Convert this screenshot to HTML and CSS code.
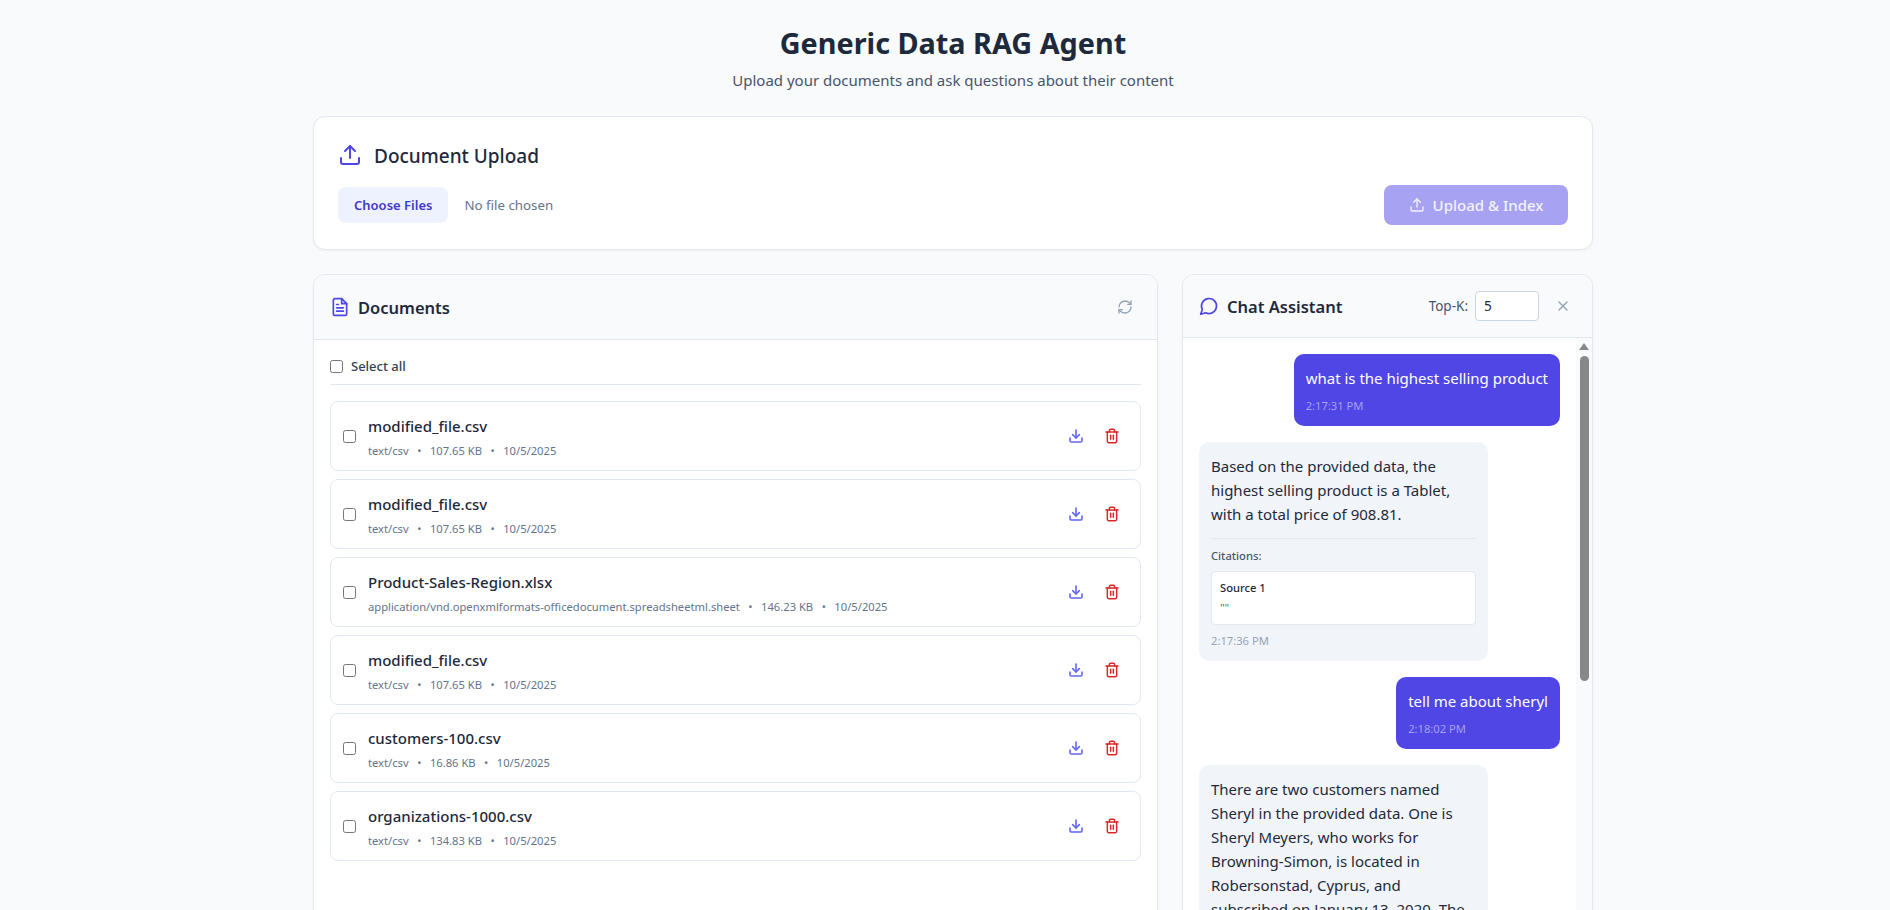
FILE: index.html
```html
<!DOCTYPE html>
<html lang="en">
<head>
    <meta charset="UTF-8">
    <meta name="viewport" content="width=device-width, initial-scale=1.0">
    <title>Generic Data RAG Agent</title>
    <link rel="stylesheet" href="styles.css">
</head>
<body>
    <div class="wrapper">
        <header class="page-head">
            <h1>Generic Data RAG Agent</h1>
            <p>Upload your documents and ask questions about their content</p>
        </header>

        <section class="card upload-card">
            <div class="upload-title">
                <svg class="icon-upload" viewBox="0 0 24 24" fill="none" stroke="currentColor" stroke-width="2" stroke-linecap="round" stroke-linejoin="round"><path d="M3 15v4a2 2 0 0 0 2 2h14a2 2 0 0 0 2-2v-4"/><path d="M17 8l-5-5-5 5"/><path d="M12 3v12"/></svg>
                <h2>Document Upload</h2>
            </div>
            <div class="upload-row">
                <div class="file-pick">
                    <span class="file-btn">Choose Files</span>
                    <span class="file-none">No file chosen</span>
                </div>
                <button class="upload-btn" type="button" disabled>
                    <svg viewBox="0 0 24 24" fill="none" stroke="currentColor" stroke-width="2" stroke-linecap="round" stroke-linejoin="round"><path d="M3 15v4a2 2 0 0 0 2 2h14a2 2 0 0 0 2-2v-4"/><path d="M17 8l-5-5-5 5"/><path d="M12 3v12"/></svg>
                    Upload &amp; Index
                </button>
            </div>
        </section>

        <div class="panels">
            <section class="card panel">
                <div class="panel-head docs-head">
                    <div class="panel-title">
                        <svg class="icon-doc" viewBox="0 0 24 24" fill="none" stroke="currentColor" stroke-width="2" stroke-linecap="round" stroke-linejoin="round"><path d="M14 2H6a2 2 0 0 0-2 2v16a2 2 0 0 0 2 2h12a2 2 0 0 0 2-2V8z"/><path d="M14 2v6h6"/><path d="M16 13H8"/><path d="M16 17H8"/><path d="M10 9H8"/></svg>
                        <h3>Documents</h3>
                    </div>
                    <svg class="icon-refresh" viewBox="0 0 24 24" fill="none" stroke="currentColor" stroke-width="2" stroke-linecap="round" stroke-linejoin="round"><path d="M3 12a9 9 0 0 1 9-9 9.75 9.75 0 0 1 6.74 2.74L21 8"/><path d="M21 3v5h-5"/><path d="M21 12a9 9 0 0 1-9 9 9.75 9.75 0 0 1-6.74-2.74L3 16"/><path d="M8 16H3v5"/></svg>
                </div>
                <div class="docs-body">
                    <label class="select-all"><input type="checkbox"> Select all</label>
                    <ul class="doc-list">
                        <li class="doc-row">
                            <input type="checkbox">
                            <div class="doc-info">
                                <div class="doc-name">modified_file.csv</div>
                                <div class="doc-meta"><span>text/csv</span><span>•</span><span>107.65 KB</span><span>•</span><span>10/5/2025</span></div>
                            </div>
                            <svg class="icon-dl" viewBox="0 0 24 24" fill="none" stroke="currentColor" stroke-width="2.4" stroke-linecap="round" stroke-linejoin="round"><path d="M3 15v4a2 2 0 0 0 2 2h14a2 2 0 0 0 2-2v-4"/><path d="M7 10l5 5 5-5"/><path d="M12 15V3"/></svg>
                            <svg class="icon-trash" viewBox="0 0 24 24" fill="none" stroke="currentColor" stroke-width="2.2" stroke-linecap="round" stroke-linejoin="round"><path d="M3 6h18"/><path d="M19 6v14a2 2 0 0 1-2 2H7a2 2 0 0 1-2-2V6"/><path d="M8 6V4a2 2 0 0 1 2-2h4a2 2 0 0 1 2 2v2"/><path d="M10 11v6"/><path d="M14 11v6"/></svg>
                        </li>
                        <li class="doc-row">
                            <input type="checkbox">
                            <div class="doc-info">
                                <div class="doc-name">modified_file.csv</div>
                                <div class="doc-meta"><span>text/csv</span><span>•</span><span>107.65 KB</span><span>•</span><span>10/5/2025</span></div>
                            </div>
                            <svg class="icon-dl" viewBox="0 0 24 24" fill="none" stroke="currentColor" stroke-width="2.4" stroke-linecap="round" stroke-linejoin="round"><path d="M3 15v4a2 2 0 0 0 2 2h14a2 2 0 0 0 2-2v-4"/><path d="M7 10l5 5 5-5"/><path d="M12 15V3"/></svg>
                            <svg class="icon-trash" viewBox="0 0 24 24" fill="none" stroke="currentColor" stroke-width="2.2" stroke-linecap="round" stroke-linejoin="round"><path d="M3 6h18"/><path d="M19 6v14a2 2 0 0 1-2 2H7a2 2 0 0 1-2-2V6"/><path d="M8 6V4a2 2 0 0 1 2-2h4a2 2 0 0 1 2 2v2"/><path d="M10 11v6"/><path d="M14 11v6"/></svg>
                        </li>
                        <li class="doc-row">
                            <input type="checkbox">
                            <div class="doc-info">
                                <div class="doc-name">Product-Sales-Region.xlsx</div>
                                <div class="doc-meta"><span>application/vnd.openxmlformats-officedocument.spreadsheetml.sheet</span><span>•</span><span>146.23 KB</span><span>•</span><span>10/5/2025</span></div>
                            </div>
                            <svg class="icon-dl" viewBox="0 0 24 24" fill="none" stroke="currentColor" stroke-width="2.4" stroke-linecap="round" stroke-linejoin="round"><path d="M3 15v4a2 2 0 0 0 2 2h14a2 2 0 0 0 2-2v-4"/><path d="M7 10l5 5 5-5"/><path d="M12 15V3"/></svg>
                            <svg class="icon-trash" viewBox="0 0 24 24" fill="none" stroke="currentColor" stroke-width="2.2" stroke-linecap="round" stroke-linejoin="round"><path d="M3 6h18"/><path d="M19 6v14a2 2 0 0 1-2 2H7a2 2 0 0 1-2-2V6"/><path d="M8 6V4a2 2 0 0 1 2-2h4a2 2 0 0 1 2 2v2"/><path d="M10 11v6"/><path d="M14 11v6"/></svg>
                        </li>
                        <li class="doc-row">
                            <input type="checkbox">
                            <div class="doc-info">
                                <div class="doc-name">modified_file.csv</div>
                                <div class="doc-meta"><span>text/csv</span><span>•</span><span>107.65 KB</span><span>•</span><span>10/5/2025</span></div>
                            </div>
                            <svg class="icon-dl" viewBox="0 0 24 24" fill="none" stroke="currentColor" stroke-width="2.4" stroke-linecap="round" stroke-linejoin="round"><path d="M3 15v4a2 2 0 0 0 2 2h14a2 2 0 0 0 2-2v-4"/><path d="M7 10l5 5 5-5"/><path d="M12 15V3"/></svg>
                            <svg class="icon-trash" viewBox="0 0 24 24" fill="none" stroke="currentColor" stroke-width="2.2" stroke-linecap="round" stroke-linejoin="round"><path d="M3 6h18"/><path d="M19 6v14a2 2 0 0 1-2 2H7a2 2 0 0 1-2-2V6"/><path d="M8 6V4a2 2 0 0 1 2-2h4a2 2 0 0 1 2 2v2"/><path d="M10 11v6"/><path d="M14 11v6"/></svg>
                        </li>
                        <li class="doc-row">
                            <input type="checkbox">
                            <div class="doc-info">
                                <div class="doc-name">customers-100.csv</div>
                                <div class="doc-meta"><span>text/csv</span><span>•</span><span>16.86 KB</span><span>•</span><span>10/5/2025</span></div>
                            </div>
                            <svg class="icon-dl" viewBox="0 0 24 24" fill="none" stroke="currentColor" stroke-width="2.4" stroke-linecap="round" stroke-linejoin="round"><path d="M3 15v4a2 2 0 0 0 2 2h14a2 2 0 0 0 2-2v-4"/><path d="M7 10l5 5 5-5"/><path d="M12 15V3"/></svg>
                            <svg class="icon-trash" viewBox="0 0 24 24" fill="none" stroke="currentColor" stroke-width="2.2" stroke-linecap="round" stroke-linejoin="round"><path d="M3 6h18"/><path d="M19 6v14a2 2 0 0 1-2 2H7a2 2 0 0 1-2-2V6"/><path d="M8 6V4a2 2 0 0 1 2-2h4a2 2 0 0 1 2 2v2"/><path d="M10 11v6"/><path d="M14 11v6"/></svg>
                        </li>
                        <li class="doc-row">
                            <input type="checkbox">
                            <div class="doc-info">
                                <div class="doc-name">organizations-1000.csv</div>
                                <div class="doc-meta"><span>text/csv</span><span>•</span><span>134.83 KB</span><span>•</span><span>10/5/2025</span></div>
                            </div>
                            <svg class="icon-dl" viewBox="0 0 24 24" fill="none" stroke="currentColor" stroke-width="2.4" stroke-linecap="round" stroke-linejoin="round"><path d="M3 15v4a2 2 0 0 0 2 2h14a2 2 0 0 0 2-2v-4"/><path d="M7 10l5 5 5-5"/><path d="M12 15V3"/></svg>
                            <svg class="icon-trash" viewBox="0 0 24 24" fill="none" stroke="currentColor" stroke-width="2.2" stroke-linecap="round" stroke-linejoin="round"><path d="M3 6h18"/><path d="M19 6v14a2 2 0 0 1-2 2H7a2 2 0 0 1-2-2V6"/><path d="M8 6V4a2 2 0 0 1 2-2h4a2 2 0 0 1 2 2v2"/><path d="M10 11v6"/><path d="M14 11v6"/></svg>
                        </li>
                    </ul>
                </div>
            </section>

            <section class="card panel">
                <div class="panel-head chat-head">
                    <div class="panel-title">
                        <svg class="icon-chat" viewBox="0 0 24 24" fill="none" stroke="currentColor" stroke-width="2" stroke-linecap="round" stroke-linejoin="round"><path d="M7.9 20A9 9 0 1 0 4 16.1L2 22z"/></svg>
                        <h3>Chat Assistant</h3>
                    </div>
                    <div class="chat-tools">
                        <label class="topk">Top-K: <input type="text" value="5"></label>
                        <svg class="icon-close" viewBox="0 0 24 24" fill="none" stroke="currentColor" stroke-width="2" stroke-linecap="round"><path d="M18 6L6 18"/><path d="M6 6l12 12"/></svg>
                    </div>
                </div>
                <div class="chat-body">
                    <div class="messages">
                        <div class="msg msg-user">
                            <p>what is the highest selling product</p>
                            <time>2:17:31 PM</time>
                        </div>
                        <div class="msg msg-bot">
                            <p>Based on the provided data, the highest selling product is a Tablet, with a total price of 908.81.</p>
                            <div class="citations">
                                <div class="cite-label">Citations:</div>
                                <div class="cite-box">
                                    <div class="cite-source">Source 1</div>
                                    <div class="cite-text">""</div>
                                </div>
                            </div>
                            <time>2:17:36 PM</time>
                        </div>
                        <div class="msg msg-user">
                            <p>tell me about sheryl</p>
                            <time>2:18:02 PM</time>
                        </div>
                        <div class="msg msg-bot">
                            <p>There are two customers named Sheryl in the provided data. One is Sheryl Meyers, who works for Browning-Simon, is located in Robersonstad, Cyprus, and subscribed on January 13, 2020. The</p>
                        </div>
                    </div>
                    <div class="scrollbar">
                        <span class="scroll-arrow"></span>
                        <span class="scroll-thumb"></span>
                    </div>
                </div>
            </section>
        </div>
    </div>
</body>
</html>
```

FILE: styles.css
```css
* {
    box-sizing: border-box;
}

html, body {
    height: 100%;
    overflow: hidden;
}

body {
    margin: 0;
    background-color: #f8fafc;
    color: #1e293b;
    font-family: "Noto Sans", Arial, sans-serif;
}

.wrapper {
    width: 1280px;
    margin-left: 313px;
    padding-top: 25px;
}

/* Page title */
.page-head {
    text-align: center;
    margin-bottom: 24px;
}

.page-head h1 {
    margin: 0 0 7px;
    font-size: 28.8px;
    line-height: 36px;
    font-weight: 700;
}

.page-head p {
    margin: 0;
    font-size: 15px;
    line-height: 24px;
    color: #475569;
}

.card {
    background-color: #fff;
    border: 1px solid #e2e8f0;
    border-radius: 12px;
    box-shadow: 0 1px 2px rgba(0, 0, 0, 0.05);
}

/* Upload card */
.upload-card {
    padding: 24px;
    height: 134px;
    margin-bottom: 24px;
}

.upload-title {
    display: flex;
    align-items: center;
    gap: 12px;
    height: 28px;
    margin-bottom: 16px;
}

.upload-title h2 {
    margin: 2px 0 0;
    font-size: 19px;
    font-weight: 500;
}

.icon-upload {
    width: 24px;
    height: 24px;
    color: #4f46e5;
}

.upload-row {
    display: flex;
    align-items: center;
    justify-content: space-between;
}

.file-pick {
    display: flex;
    align-items: center;
    gap: 16px;
}

.file-btn {
    display: block;
    padding: 8px 16px;
    font-size: 13px;
    line-height: 20px;
    font-weight: 600;
    color: #4338ca;
    background-color: #eef2ff;
    border-radius: 8px;
}

.file-none {
    font-size: 13.3px;
    color: #64748b;
}

.upload-btn {
    display: flex;
    align-items: center;
    justify-content: center;
    gap: 8px;
    width: 184px;
    height: 40px;
    border: none;
    border-radius: 8px;
    background-color: #a7a2f2;
    color: #f3f2fe;
    font-family: inherit;
    font-size: 15px;
    font-weight: 500;
}

.upload-btn svg {
    width: 16px;
    height: 16px;
}

/* Two panels */
.panels {
    display: grid;
    grid-template-columns: 845px 411px;
    gap: 24px;
}

.panel {
    height: 700px;
    overflow: hidden;
}

.panel-head {
    display: flex;
    align-items: center;
    justify-content: space-between;
    background-color: #f8fafc;
    border-bottom: 1px solid #e2e8f0;
}

.docs-head {
    height: 65px;
    padding: 0 16px;
}

.chat-head {
    height: 63px;
    padding: 0 16px;
}

.panel-title {
    display: flex;
    align-items: center;
    gap: 8px;
}

.panel-title h3 {
    margin: 0;
    font-size: 16.5px;
    font-weight: 600;
}

.icon-doc {
    width: 20px;
    height: 20px;
    color: #4f46e5;
}

.icon-chat {
    width: 20px;
    height: 20px;
    color: #4f46e5;
}

.icon-refresh {
    width: 16px;
    height: 16px;
    margin-right: 8px;
    color: #94a3b8;
}

/* Documents */
.docs-body {
    padding: 16px;
}

.select-all {
    display: flex;
    align-items: center;
    gap: 8px;
    height: 29px;
    padding-bottom: 8px;
    margin-bottom: 16px;
    border-bottom: 1px solid #e2e8f0;
    font-size: 13px;
    font-weight: 500;
    color: #334155;
}

input[type="checkbox"] {
    width: 13px;
    height: 13px;
    margin: 0;
    flex-shrink: 0;
}

.doc-list {
    list-style: none;
    margin: 0;
    padding: 0;
    display: flex;
    flex-direction: column;
    gap: 8px;
}

.doc-row {
    display: flex;
    align-items: center;
    height: 70px;
    padding: 0 20px 0 12px;
    border: 1px solid #e2e8f0;
    border-radius: 8px;
}

.doc-info {
    flex: 1;
    margin-left: 12px;
    padding-top: 3px;
}

.doc-name {
    font-size: 15px;
    line-height: 20px;
    font-weight: 500;
    margin-bottom: 7px;
}

.doc-meta {
    display: flex;
    gap: 8.5px;
    font-size: 11.2px;
    line-height: 16px;
    color: #64748b;
}

.icon-dl {
    width: 16px;
    height: 16px;
    color: #6366f1;
}

.icon-trash {
    width: 16px;
    height: 16px;
    margin-left: 20px;
    color: #dc2626;
}

/* Chat */
.chat-tools {
    display: flex;
    align-items: center;
    gap: 16px;
}

.topk {
    display: flex;
    align-items: center;
    gap: 7px;
    font-size: 13.5px;
    color: #475569;
}

.topk input {
    width: 64px;
    height: 30px;
    padding: 0 8px;
    border: 1px solid #cbd5e1;
    border-radius: 4px;
    font-family: inherit;
    font-size: 13.5px;
    color: #1e293b;
}

.icon-close {
    width: 16px;
    height: 16px;
    margin-right: 5px;
    color: #94a3b8;
}

.chat-body {
    display: flex;
    height: 640px;
}

.messages {
    flex: 1;
    min-width: 0;
    padding: 16px;
    display: flex;
    flex-direction: column;
    align-items: flex-start;
    gap: 16px;
}

.msg {
    max-width: 80%;
    padding: 12px;
    border-radius: 10px;
    flex-shrink: 0;
}

.msg p {
    margin: 0;
    font-size: 15px;
    line-height: 24px;
}

.msg time {
    display: block;
    margin-top: 8px;
    font-size: 11.2px;
    line-height: 16px;
}

.msg-user {
    align-self: flex-end;
    background-color: #4f46e5;
    color: #fff;
}

.msg-user time {
    color: #a5a0f0;
}

.msg-bot {
    background-color: #f1f5f9;
}

.msg-bot time {
    color: #94a3b8;
}

.citations {
    margin-top: 12px;
    padding-top: 9px;
    border-top: 1px solid #e2e8f0;
}

.cite-label {
    margin-bottom: 7px;
    font-size: 11.2px;
    line-height: 16px;
    font-weight: 500;
    color: #475569;
}

.cite-box {
    padding: 8px;
    background-color: #fff;
    border: 1px solid #e2e8f0;
    border-radius: 4px;
    font-size: 11.2px;
    line-height: 16px;
}

.cite-source {
    margin-bottom: 4px;
    font-weight: 500;
}

.cite-text {
    color: #64748b;
}

.scrollbar {
    width: 16px;
    padding-top: 5px;
    display: flex;
    flex-direction: column;
    align-items: center;
    gap: 6px;
    background-color: #f8fafc;
}

.scroll-arrow {
    width: 0;
    height: 0;
    border-left: 5px solid transparent;
    border-right: 5px solid transparent;
    border-bottom: 7px solid #888;
}

.scroll-thumb {
    width: 9px;
    height: 325px;
    background-color: #888;
    border-radius: 5px;
}
```
